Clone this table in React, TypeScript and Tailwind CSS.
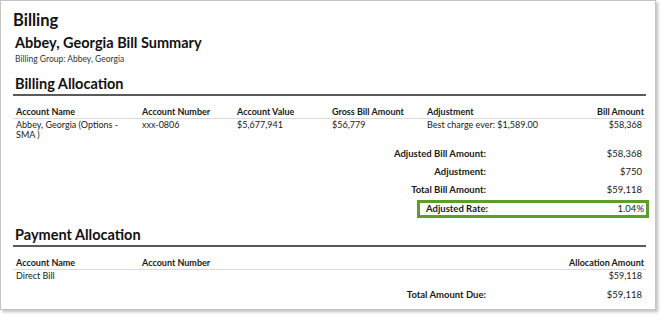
import React from "react";

const font = { fontFamily: "Lato, 'Open Sans', sans-serif" };

function SummaryRow({ label, value }: { label: string; value: string }) {
  return (
    <div className="flex h-[18px] items-center text-[9.5px] font-bold text-[#1a1a1a]">
      <div className="w-[473px] text-right">{label}</div>
      <div className="w-[156px] text-right font-normal">{value}</div>
    </div>
  );
}

export default function App() {
  return (
    <div className="bg-white w-[664px] h-[320px]" style={font}>
      <div className="w-[656px] h-[310px] border border-[#c4c4c4] shadow-[2px_2px_3px_rgba(0,0,0,0.25)] bg-white">
        <div className="pl-[12px]">
          <div className="mt-[8px] h-[22px] leading-[22px] text-[16.5px] font-bold text-[#111]">Billing</div>
          <div className="pl-[2px] mt-[2px] h-[20px] leading-[20px] text-[14.5px] font-bold text-[#111]">
            Abbey, Georgia Bill Summary
          </div>
          <div className="pl-[2px] h-[12px] leading-[12px] text-[8.5px] text-[#333]">Billing Group: Abbey, Georgia</div>

          <div className="w-[633px]">
            <div className="mt-[9px] h-[20px] leading-[20px] pl-[2px] text-[14.5px] font-bold text-[#111] border-b-2 border-[#5a5a5a] box-content">
              Billing Allocation
            </div>
            <div className="mt-[10px] grid grid-cols-[126px_95px_95px_95px_1fr_90px] h-[12px] leading-[12px] text-[9px] font-bold text-[#1a1a1a] pl-[3px] pr-[2px] border-b border-[#dcdcdc] box-content">
              <div>Account Name</div>
              <div>Account Number</div>
              <div>Account Value</div>
              <div>Gross Bill Amount</div>
              <div>Adjustment</div>
              <div className="text-right">Bill Amount</div>
            </div>
            <div className="mt-[1px] grid grid-cols-[126px_95px_95px_95px_1fr_90px] leading-[10px] text-[9px] text-[#1a1a1a] pl-[3px] pr-[4px]">
              <div className="w-[110px]">Abbey, Georgia (Options - SMA )</div>
              <div>xxx-0806</div>
              <div>$5,677,941</div>
              <div>$56,779</div>
              <div>Best charge ever: $1,589.00</div>
              <div className="text-right">$58,368</div>
            </div>
            <div className="mt-[5px]">
              <SummaryRow label="Adjusted Bill Amount:" value="$58,368" />
              <SummaryRow label="Adjustment:" value="$750" />
              <SummaryRow label="Total Bill Amount:" value="$59,118" />
              <div className="mt-[1px] ml-[404px] mr-[-3px] h-[18px] border-[3px] border-[#5c9e2a] flex items-center text-[9.5px] font-bold text-[#1a1a1a] pl-[6px] pr-[2px]">
                <div className="flex-1">Adjusted Rate:</div>
                <div className="font-normal">1.04%</div>
              </div>
            </div>

            <div className="mt-[7px] h-[20px] leading-[20px] pl-[2px] text-[14.5px] font-bold text-[#111] border-b-2 border-[#5a5a5a] box-content">
              Payment Allocation
            </div>
            <div className="mt-[10px] grid grid-cols-[126px_1fr_120px] h-[12px] leading-[12px] text-[9px] font-bold text-[#1a1a1a] pl-[3px] pr-[2px] border-b border-[#dcdcdc] box-content">
              <div>Account Name</div>
              <div>Account Number</div>
              <div className="text-right">Allocation Amount</div>
            </div>
            <div className="mt-[1px] grid grid-cols-[126px_1fr_120px] leading-[10px] text-[9px] text-[#1a1a1a] pl-[3px] pr-[4px]">
              <div>Direct Bill</div>
              <div></div>
              <div className="text-right">$59,118</div>
            </div>
            <div className="mt-[5px]">
              <SummaryRow label="Total Amount Due:" value="$59,118" />
            </div>
          </div>
        </div>
      </div>
    </div>
  );
}
